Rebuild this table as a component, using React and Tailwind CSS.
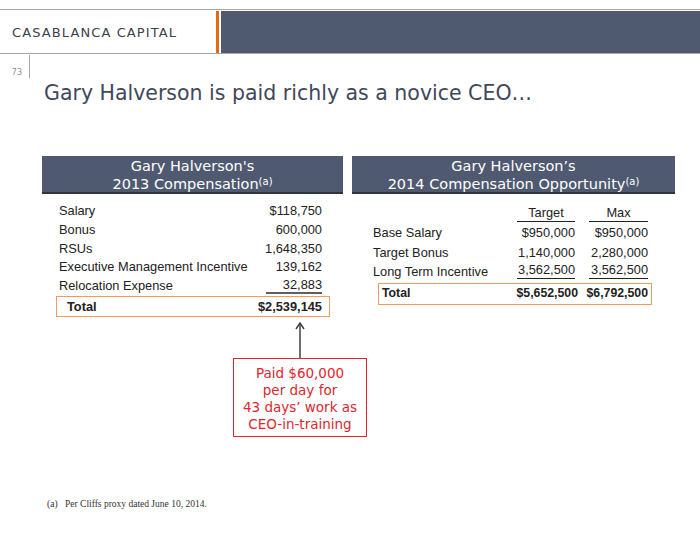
import React from 'react';

const gothic = { fontFamily: '"DejaVu Sans", "Liberation Sans", sans-serif' };
const body = { fontFamily: '"Liberation Sans", Arial, sans-serif' };

const comp2013 = [
  { label: 'Salary', value: '$118,750' },
  { label: 'Bonus', value: '600,000' },
  { label: 'RSUs', value: '1,648,350' },
  { label: 'Executive Management Incentive', value: '139,162' },
  { label: 'Relocation Expense', value: '32,883', underline: true },
];

const comp2014 = [
  { label: 'Base Salary', target: '$950,000', max: '$950,000' },
  { label: 'Target Bonus', target: '1,140,000', max: '2,280,000' },
  { label: 'Long Term Incentive', target: '3,562,500', max: '3,562,500', underline: true },
];

const TableHeader = ({ line1, line2 }) => (
  <div
    className="h-[38px] bg-[#4f5a70] border-b-2 border-[#2f3440] text-white text-center text-[14.5px] leading-[18px] pt-[1px]"
    style={gothic}
  >
    <div>{line1}</div>
    <div>
      {line2}
      <span className="relative top-[-4px] text-[10px]">(a)</span>
    </div>
  </div>
);

const App = () => {
  return (
    <div className="w-[700px] h-[535px] bg-white overflow-hidden text-[#222]">
      {/* header band */}
      <div className="mt-[9px] border-y border-[#a6a6a6] h-[45px] pt-[1px] flex">
        <div className="w-[216px] flex items-center pl-[12px] pt-[2px]">
          <span className="text-[13px] tracking-[1.1px] text-[#3b404b]" style={gothic}>
            CASABLANCA CAPITAL
          </span>
        </div>
        <div className="w-[3px] bg-[#e46c0a]" />
        <div className="w-[2px]" />
        <div className="flex-1 bg-[#4f5a70]" />
      </div>

      {/* page number */}
      <div className="flex h-[23px] mt-[1px]">
        <div className="w-[29px] flex items-end justify-end pr-[7px]">
          <span className="text-[8px] leading-[10px] text-[#8c8c8c]" style={gothic}>73</span>
        </div>
        <div className="w-px bg-[#a6a6a6]" />
      </div>

      <h1 className="pl-[44px] mt-[2px] text-[20.5px] leading-[26px] text-[#3f4859]" style={gothic}>
        Gary Halverson is paid richly as a novice CEO…
      </h1>

      {/* tables */}
      <div className="flex mt-[50px] pl-[42px] gap-[9px] text-[12.8px]" style={body}>
        <div className="w-[301px]">
          <TableHeader line1="Gary Halverson's" line2="2013 Compensation" />
          <div className="pt-[8px]">
            {comp2013.map((row) => (
              <div key={row.label} className="flex justify-between h-[18.75px] leading-[18.75px] pl-[17px] pr-[21px]">
                <span>{row.label}</span>
                {row.underline ? (
                  <span className="inline-block w-[56px] text-right border-b-2 border-[#5f5f5f] leading-[15px] h-[17px]">
                    {row.value}
                  </span>
                ) : (
                  <span>{row.value}</span>
                )}
              </div>
            ))}
            <div className="ml-[14px] w-[274px] h-[21px] border-[1.5px] border-[#f59b5a] flex justify-between items-center pl-[10px] pr-[7px] font-bold">
              <span>Total</span>
              <span>$2,539,145</span>
            </div>
          </div>
        </div>

        <div className="w-[323px]">
          <TableHeader line1="Gary Halverson’s" line2="2014 Compensation Opportunity" />
          <div className="pt-[10px] pl-[21px]">
            <div className="grid grid-cols-[144px_58px_14px_59px] h-[17px] leading-[17px]">
              <span />
              <span className="text-center border-b border-[#222]">Target</span>
              <span />
              <span className="text-center border-b border-[#222]">Max</span>
            </div>
            <div className="pt-[2px]">
              {comp2014.map((row) => (
                <div key={row.label} className="grid grid-cols-[144px_58px_14px_59px] h-[19.5px] leading-[19px]">
                  <span>{row.label}</span>
                  {row.underline ? (
                    <>
                      <span className="text-right border-b border-[#222] leading-[15px] h-[17px]">{row.target}</span>
                      <span />
                      <span className="text-right border-b border-[#222] leading-[15px] h-[17px]">{row.max}</span>
                    </>
                  ) : (
                    <>
                      <span className="text-right">{row.target}</span>
                      <span />
                      <span className="text-right">{row.max}</span>
                    </>
                  )}
                </div>
              ))}
            </div>
            <div className="ml-[5px] mt-[1px] w-[274px] h-[22px] border-[1.5px] border-[#f59b5a] grid grid-cols-[137.5px_58px_12px_61px] items-center font-bold text-[12.3px]">
              <span className="pl-[3px]">Total</span>
              <span className="text-right">$5,652,500</span>
              <span />
              <span className="text-right pr-[1px]">$6,792,500</span>
            </div>
          </div>
        </div>
      </div>

      {/* callout */}
      <div className="ml-[233px] w-[134px] mt-[5px] flex flex-col items-center">
        <svg width="12" height="36" viewBox="0 0 12 36" className="block">
          <line x1="6" y1="1" x2="6" y2="36" stroke="#404040" strokeWidth="1.5" />
          <polyline points="2,7 6,1 10,7" fill="none" stroke="#404040" strokeWidth="1.5" />
        </svg>
        <div
          className="w-[134px] h-[79px] border border-[#e0262d] text-[#e0262d] text-center text-[13.5px] leading-[17px] pt-[6px]"
          style={gothic}
        >
          <div>Paid $60,000</div>
          <div>per day for</div>
          <div>43 days’ work as</div>
          <div>CEO-in-training</div>
        </div>
      </div>

      {/* footnote */}
      <div
        className="flex mt-[60px] pl-[47px] text-[9.5px] text-[#333]"
        style={{ fontFamily: '"Liberation Serif", "Times New Roman", serif' }}
      >
        <span className="w-[18px]">(a)</span>
        <span>Per Cliffs proxy dated June 10, 2014.</span>
      </div>
    </div>
  );
};

export default App;
